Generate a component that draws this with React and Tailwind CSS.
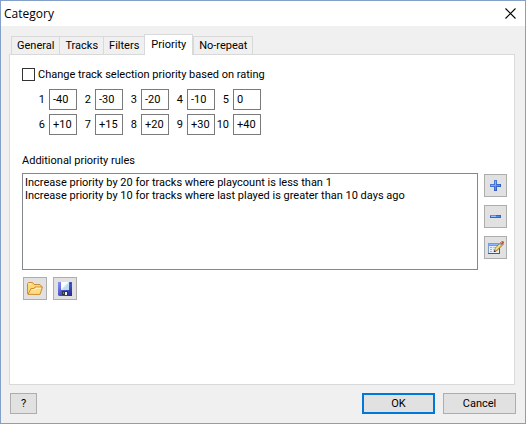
import { useState } from 'react';

const TABS = ['General', 'Tracks', 'Filters', 'Priority', 'No-repeat'];

const RATINGS = ['-40', '-30', '-20', '-10', '0', '+10', '+15', '+20', '+30', '+40'];

const RULES = [
  'Increase priority by 20 for tracks where playcount is less than 1',
  'Increase priority by 10 for tracks where last played is greater than 10 days ago',
];

function CloseIcon() {
  return (
    <svg width="11" height="11" viewBox="0 0 11 11" stroke="#000" strokeWidth="1.1">
      <path d="M0.5 0.5l10 10M10.5 0.5l-10 10" />
    </svg>
  );
}

function PlusIcon() {
  return (
    <svg width="11" height="11" viewBox="0 0 11 11">
      <defs>
        <linearGradient id="plus" x1="0" y1="0" x2="1" y2="1">
          <stop offset="0" stopColor="#5c8ae4" />
          <stop offset="1" stopColor="#2450b8" />
        </linearGradient>
      </defs>
      <path d="M4 0h3v4h4v3H7v4H4V7H0V4h4z" fill="url(#plus)" />
      <path d="M5 1h1v4h4v1H6v4H5V6H1V5h4z" fill="#85aef8" />
      <path d="M6 5h4v1H6v4H5V6z" fill="#5c8cec" />
    </svg>
  );
}

function MinusIcon() {
  return (
    <svg width="11" height="3" viewBox="0 0 11 3">
      <path d="M0 0h11v3H0z" fill="#3564cc" />
      <path d="M0 0h6v1H0z" fill="#5e8ce8" />
      <path d="M1 1h5v1H1z" fill="#9cc0fc" />
      <path d="M6 1h4v1H6z" fill="#5688ea" />
    </svg>
  );
}

function EditIcon() {
  return (
    <svg width="16" height="14" viewBox="0 0 16 14">
      <path d="M0 2h12v11H0z" fill="#e6eef9" />
      <path d="M0 2h12v3H0z" fill="#6b9bf4" />
      <path d="M1 3h9v1H1z" fill="#8fb6fc" />
      <path d="M0 5h1v8H0z" fill="#7d9cc8" />
      <path d="M11 5h1v8h-1zM0 12h12v1H0z" fill="#3c5f88" />
      <path d="M2 6h2v1H2zM2 8h2v1H2zM2 10h2v1H2z" fill="#9fb2cc" />
      <path d="M5 6h4v1H5zM5 8h2v1H5zM5 10h2v1H5z" fill="#b9c6d8" />
      <path d="M6 11l1-4 6-6 3 2-7 7z" fill="#9a7420" />
      <path d="M7 10l1-3 5-5 2 1-6 6z" fill="#e8c448" />
      <path d="M7 8l5-5 1 1-5 5z" fill="#f8e68c" />
      <path d="M11 3l2-2 2 2-2 2z" fill="#a9aeb4" />
      <path d="M12 2l2-2h1l1 1v1l-2 2z" fill="#c8584c" />
      <path d="M13 1h1v1h-1z" fill="#e89c84" />
      <path d="M6 11v-2l2 2z" fill="#333" />
    </svg>
  );
}

function FolderIcon() {
  return (
    <svg width="16" height="13" viewBox="0 0 16 13" strokeLinejoin="round">
      <path d="M0.5 11.5v-10l1-1h4l1.5 2h6l1 1v3L12 11.5z" fill="#fbd979" stroke="#cf8c34" />
      <path d="M1.5 2h3" stroke="#fff3c4" />
      <path d="M1 12.4l3-5.9h3l1-1.5h7.5L13 12.4z" fill="#fedc80" stroke="#cf8c34" />
      <path d="M5 7.7h3l1-1.5h5" fill="none" stroke="#fff6cf" />
    </svg>
  );
}

function SaveIcon() {
  return (
    <svg width="14" height="14" viewBox="0 0 14 14">
      <defs>
        <linearGradient id="disk" x1="0" y1="0" x2="1" y2="1">
          <stop offset="0" stopColor="#8c94f4" />
          <stop offset="0.5" stopColor="#4c54c8" />
          <stop offset="1" stopColor="#242888" />
        </linearGradient>
        <linearGradient id="label" x1="0" y1="0" x2="1" y2="1">
          <stop offset="0.4" stopColor="#fff" />
          <stop offset="0.6" stopColor="#bcdcf0" />
        </linearGradient>
      </defs>
      <path d="M0 0h14v14H1l-1-1z" fill="url(#disk)" />
      <path d="M3 0h8v8H3z" fill="url(#label)" />
      <path d="M12 1h1v1h-1z" fill="#24286c" />
      <path d="M4 9h6v4H4z" fill="#34343c" />
      <path d="M7 10h2v3H7z" fill="#f4f4f4" />
      <path d="M5 10h1v2H5z" fill="#808088" />
    </svg>
  );
}

function IconButton({ label, className, children }) {
  return (
    <button
      type="button"
      aria-label={label}
      className={`flex h-[23px] items-center justify-center border border-[#adadad] bg-[#e1e1e1] ${className}`}
    >
      {children}
    </button>
  );
}

function RatingField({ rating, value, onChange }) {
  return (
    <div className="flex items-center">
      <label htmlFor={`rating-${rating}`} className="w-[14px] text-right">{rating}</label>
      <input
        id={`rating-${rating}`}
        type="text"
        value={value}
        onChange={(e) => onChange(e.target.value)}
        className="ml-1 h-[21px] w-7 border border-[#7a7a7a] bg-white px-[3px] outline-none"
      />
    </div>
  );
}

function PriorityPanel() {
  const [enabled, setEnabled] = useState(false);
  const [ratings, setRatings] = useState(RATINGS);

  function setRating(index, value) {
    setRatings(ratings.map((r, i) => (i === index ? value : r)));
  }

  return (
    <div className="flex-1 border border-[#d9d9d9] bg-white pl-3 pr-[7px] pt-3">
      <label className="flex items-center gap-[3px]">
        <input
          type="checkbox"
          checked={enabled}
          onChange={(e) => setEnabled(e.target.checked)}
          className="size-[13px] appearance-none border border-[#333] bg-white checked:bg-[#0078d7]"
        />
        Change track selection priority based on rating
      </label>

      <div className="ml-[9px] mt-[7px] grid w-fit grid-cols-5 gap-y-1">
        {ratings.map((value, i) => (
          <RatingField key={i} rating={i + 1} value={value} onChange={(v) => setRating(i, v)} />
        ))}
      </div>

      <h2 className="mt-[18px]">Additional priority rules</h2>
      <div className="mt-[5px] flex gap-[6px]">
        <ul className="h-[97px] flex-1 overflow-y-auto border border-[#828790] bg-white px-[2px] pt-[2px]">
          {RULES.map((rule) => (
            <li key={rule} className="whitespace-nowrap leading-[13px]">{rule}</li>
          ))}
        </ul>
        <div className="mt-px flex flex-col gap-2">
          <IconButton label="Add rule" className="w-[23px]"><PlusIcon /></IconButton>
          <IconButton label="Remove rule" className="w-[23px]"><MinusIcon /></IconButton>
          <IconButton label="Edit rule" className="w-[23px]"><EditIcon /></IconButton>
        </div>
      </div>
      <div className="ml-px mt-[7px] flex gap-[6px]">
        <IconButton label="Open rules" className="w-6"><FolderIcon /></IconButton>
        <IconButton label="Save rules" className="w-6"><SaveIcon /></IconButton>
      </div>
    </div>
  );
}

export default function App() {
  const [tab, setTab] = useState('Priority');

  return (
    <div className="flex min-h-screen flex-col border border-[#84a0c8] bg-[#f0f0f0] font-['Roboto','Liberation_Sans',sans-serif] text-[11px] leading-[15px] text-black">
      <header className="flex h-[25px] items-center justify-between bg-white pl-[3px] pr-[9px]">
        <h1 className="font-['Open_Sans','Noto_Sans',sans-serif] text-[12px]">Category</h1>
        <button type="button" aria-label="Close"><CloseIcon /></button>
      </header>

      <main className="flex flex-1 flex-col pb-[9px] pl-2 pr-[10px] pt-2">
        <div role="tablist" className="ml-[2px] flex items-end">
          {TABS.map((name) => (
            <button
              key={name}
              type="button"
              role="tab"
              aria-selected={tab === name}
              onClick={() => setTab(name)}
              className={
                tab === name
                  ? 'z-10 mb-[-1px] h-[21px] border border-b-0 border-[#d9d9d9] bg-white px-[6px] pb-[2px]'
                  : 'mr-[-1px] h-[18px] border border-b-0 border-[#d9d9d9] px-[5px]'
              }
            >
              {name}
            </button>
          ))}
        </div>
        <PriorityPanel />
        <footer className="ml-px mr-[-1px] mt-2 flex items-center gap-2">
          <button type="button" aria-label="Help" className="mr-auto h-[21px] w-[27px] border border-[#adadad] bg-[#e1e1e1]">?</button>
          <button type="button" className="h-[21px] w-[73px] border-2 border-[#0078d7] bg-[#e1e1e1] leading-none">OK</button>
          <button type="button" className="h-[21px] w-[73px] border border-[#adadad] bg-[#e1e1e1] leading-none">Cancel</button>
        </footer>
      </main>
    </div>
  );
}
